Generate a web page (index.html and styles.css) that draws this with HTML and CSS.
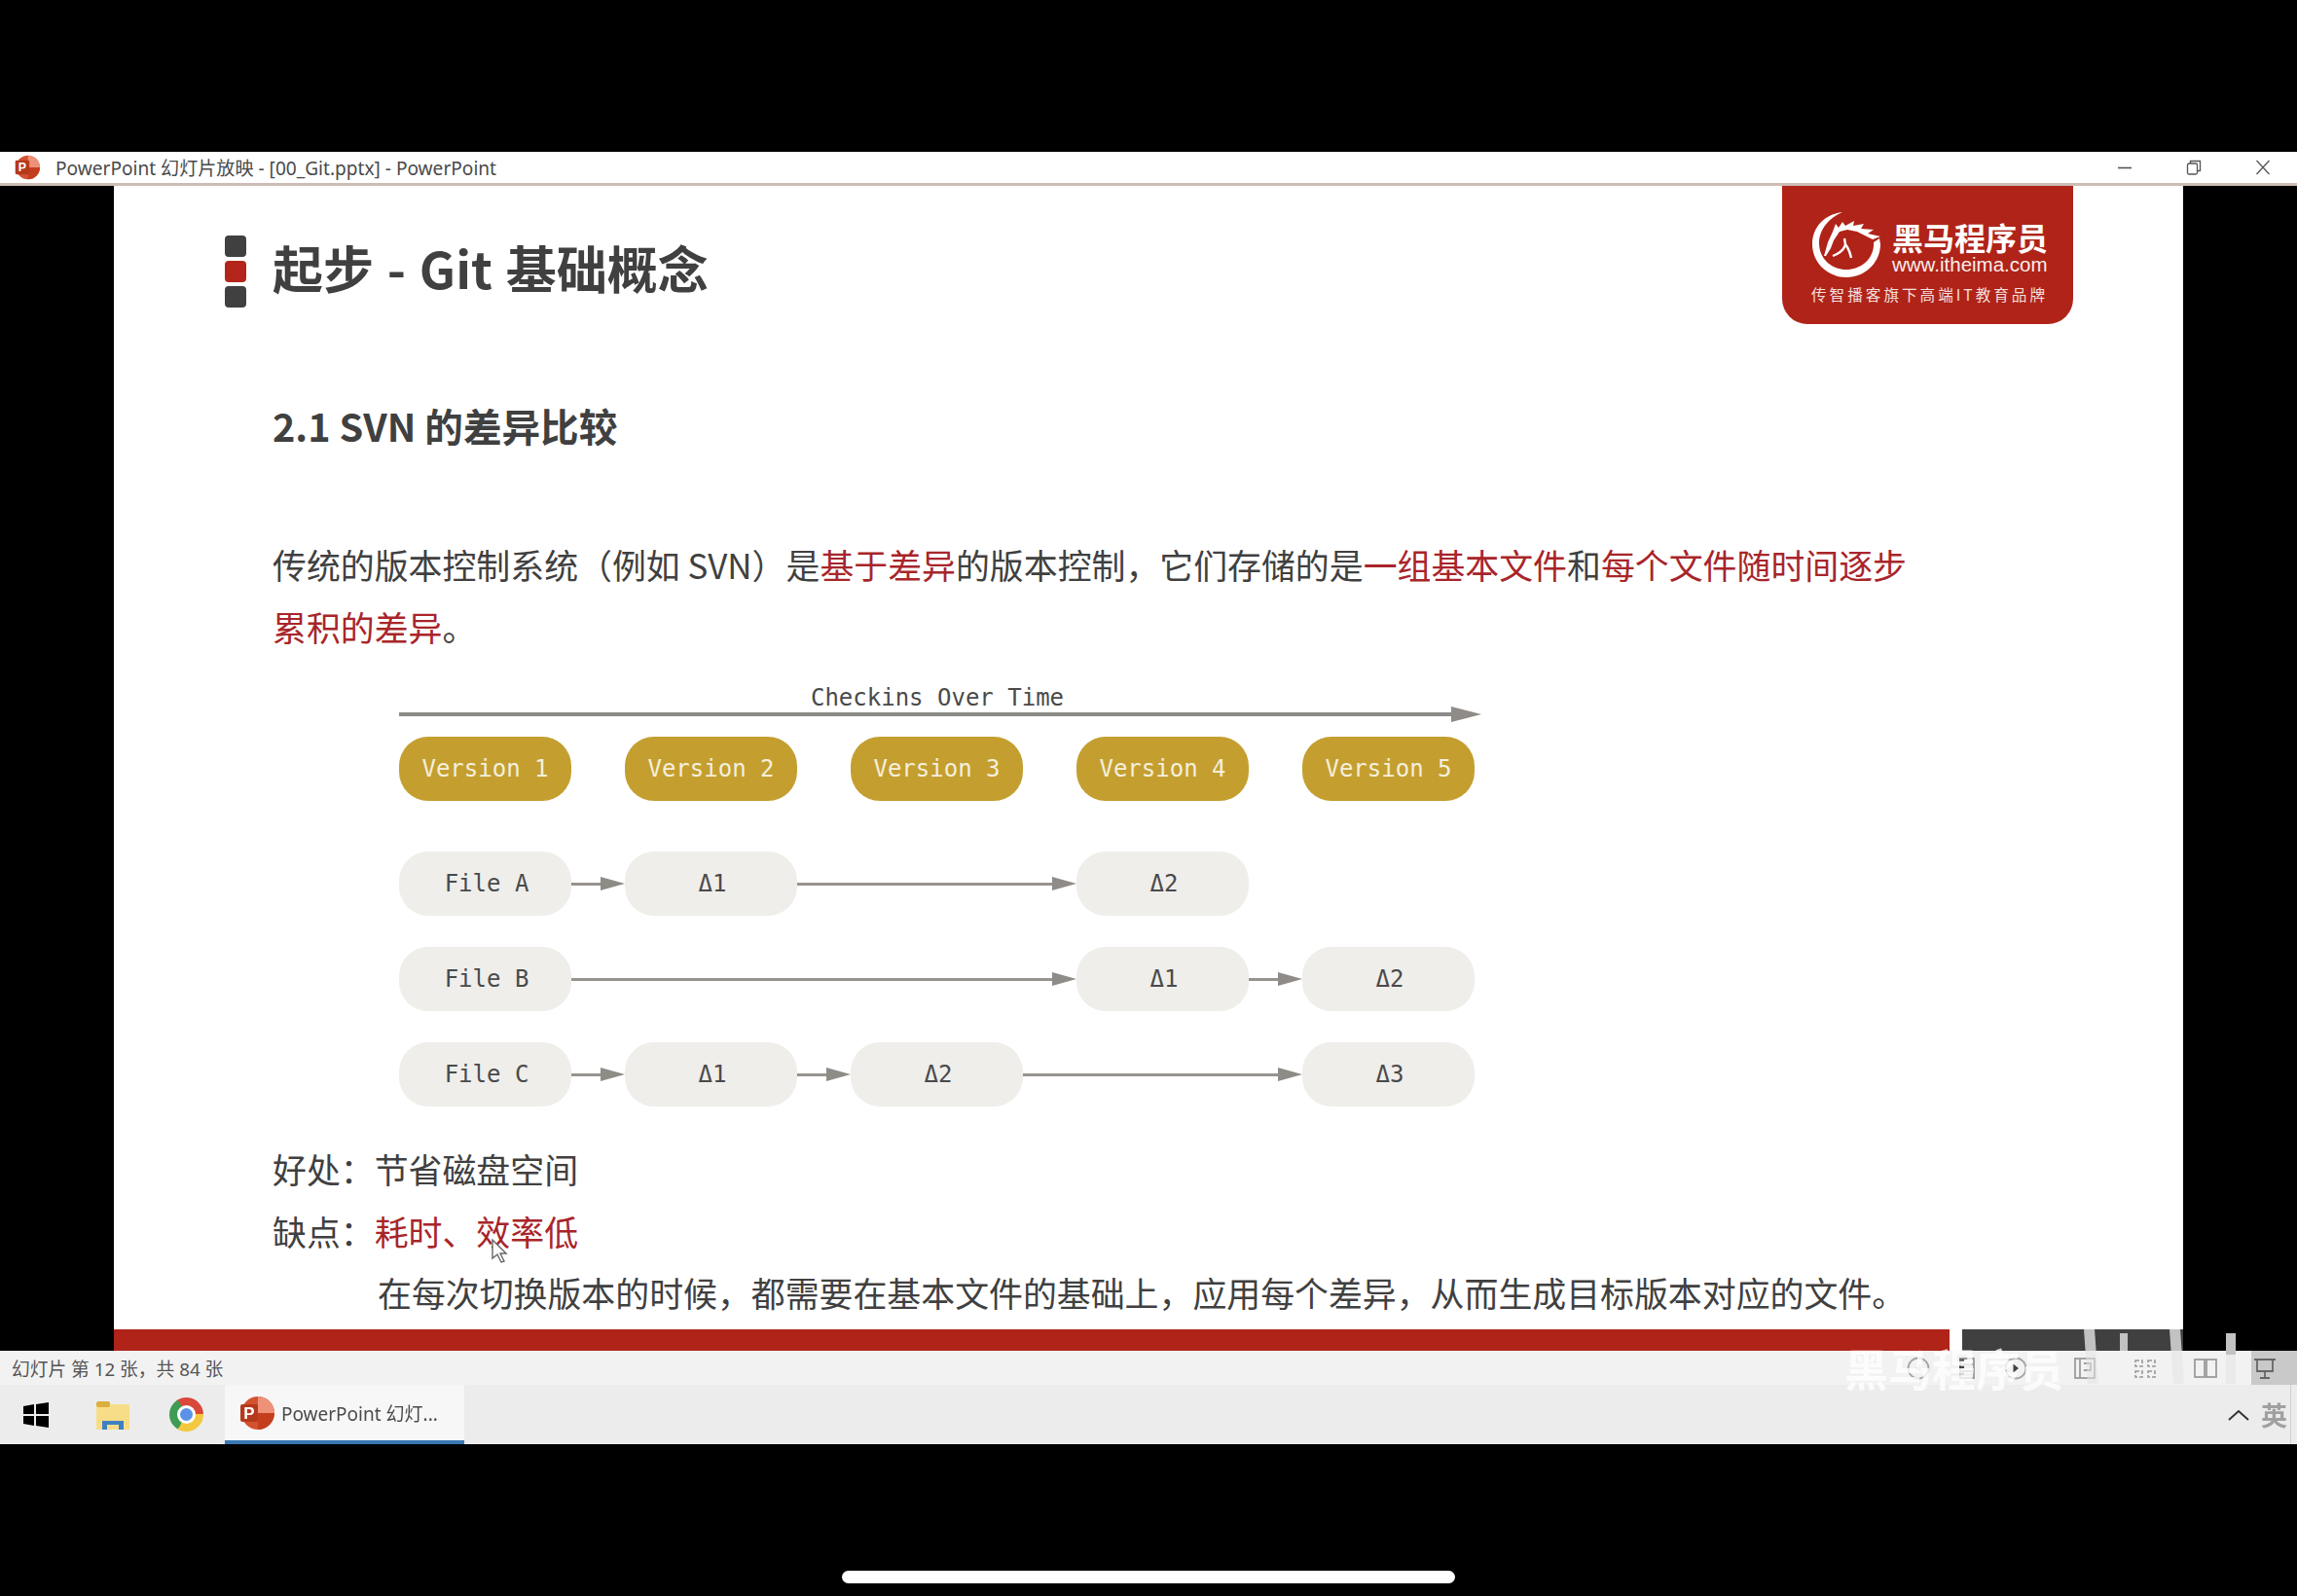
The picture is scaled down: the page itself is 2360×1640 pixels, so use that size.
FILE: index.html
```html
<!DOCTYPE html>
<html lang="zh-CN">
<head>
<meta charset="utf-8">
<title>PowerPoint</title>
<link rel="stylesheet" href="styles.css">
</head>
<body>
<div class="screen">
  <header class="titlebar">
    <svg class="tb-icon" viewBox="0 0 36 36"><circle cx="19" cy="18" r="17" fill="#d35230"/><path d="M19 1a17 17 0 0 1 17 17H19z" fill="#ed9278"/><path d="M19 18h17a17 17 0 0 1-17 17z" fill="#c43e1c"/><rect x="1" y="8" width="20" height="20" rx="2" fill="#b5391c"/><text x="11" y="24" class="tb-p">P</text></svg>
    <span class="tb-title">PowerPoint 幻灯片放映 - [00_Git.pptx] - PowerPoint</span>
    <div class="tb-controls">
      <svg viewBox="0 0 16 16"><path d="M1 8.5h14" stroke="#555" stroke-width="1.6"/></svg>
      <svg viewBox="0 0 16 16" fill="none" stroke="#555" stroke-width="1.3"><rect x="1.5" y="4" width="10" height="11" rx="1.5"/><path d="M4.5 4V1.5h10v10H11.5"/></svg>
      <svg viewBox="0 0 16 16"><path d="M1.5 1l13 14M14.5 1l-13 14" stroke="#555" stroke-width="1.3" fill="none"/></svg>
    </div>
  </header>

  <main class="stage">
    <section class="slide">
      <div class="slide-head">
        <div class="heading">
          <div class="marker"><i></i><i class="on"></i><i></i></div>
          <h1>起步 - Git 基础概念</h1>
        </div>
        <div class="logo">
          <div class="logo-row">
            <svg class="emblem" viewBox="0 0 100 90" fill="#fff">
              <path d="M43 13C25 15 12 28 12 46C12 65 28 80 47 80C67 80 82 64 82 46L81 40L75 44C76 60 63 72 47 72C31 72 19 60 19 45C19 31 29 19 43 13Z"/>
              <path d="M24 58L28 44L33 33L36 25L39 29L43 23L46 27L55 22L54 27L65 25L62 30L75 31L69 35L82 38L74 41L66 37L58 33L48 31L40 33L34 42L31 50L26 58Z"/>
              <path d="M45 40L46 46C45 52 38 56 33 58M46 46C49 50 51 55 52 60" fill="none" stroke="#fff" stroke-width="2.4"/>
            </svg>
            <div class="logo-text"><b>黑马程序员</b><span>www.itheima.com</span></div>
          </div>
          <div class="logo-tag">传智播客旗下高端IT教育品牌</div>
        </div>
      </div>

      <h2>2.1 SVN 的差异比较</h2>
      <p class="body lead">传统的版本控制系统（例如 SVN）是<em>基于差异</em>的版本控制，它们存储的是<em>一组基本文件</em>和<em>每个文件随时间逐步</em><em>累积的差异</em>。</p>

      <div class="diagram">
        <div class="dg-label">Checkins Over Time</div>
        <div class="arrow dg-time"><s></s><u></u></div>
        <div class="dg-grid">
          <div class="pill ver c1">Version 1</div><div class="pill ver c3">Version 2</div><div class="pill ver c5">Version 3</div><div class="pill ver c7">Version 4</div><div class="pill ver c9">Version 5</div>

          <div class="pill c1">File A</div>
          <div class="arrow"><s></s><u></u></div>
          <div class="pill">Δ1</div>
          <div class="arrow span3"><s></s><u></u></div>
          <div class="pill">Δ2</div>

          <div class="pill c1">File B</div>
          <div class="arrow span5"><s></s><u></u></div>
          <div class="pill">Δ1</div>
          <div class="arrow"><s></s><u></u></div>
          <div class="pill">Δ2</div>

          <div class="pill c1">File C</div>
          <div class="arrow"><s></s><u></u></div>
          <div class="pill">Δ1</div>
          <div class="arrow"><s></s><u></u></div>
          <div class="pill">Δ2</div>
          <div class="arrow span3"><s></s><u></u></div>
          <div class="pill">Δ3</div>
        </div>
      </div>

      <div class="notes">
        <p class="body">好处：节省磁盘空间</p>
        <p class="body">缺点：<em>耗时、效率低</em></p>
        <p class="body indent">在每次切换版本的时候，都需要在基本文件的基础上，应用每个差异，从而生成目标版本对应的文件。</p>
      </div>

      <footer class="slide-foot"><div class="foot-red"></div><div class="foot-dark"></div></footer>
    </section>
  </main>

  <div class="statusbar">
    <span class="status-text">幻灯片 第 12 张，共 84 张</span>
    <div class="status-icons">
      <div class="group-a">
        <svg viewBox="0 0 28 28" fill="none" stroke="#a5a5a5" stroke-width="1.8"><circle cx="14" cy="14" r="10.5"/><path d="M16.5 9.5v9L11 14z" fill="#c4c4c4" stroke="none"/></svg>
        <svg viewBox="0 0 28 28" fill="none" stroke="#777" stroke-width="1.8"><path d="M7 4h14v20H7zM7 10h14M7 17h14" stroke="#999"/><path d="M6 6h5M6 13h5M6 20h5" stroke="#444" stroke-width="2.4"/></svg>
        <svg viewBox="0 0 28 28" fill="none" stroke="#a5a5a5" stroke-width="1.8"><circle cx="14" cy="14" r="10.5"/><path d="M11.5 9.5v9L17 14z" fill="#444" stroke="none"/></svg>
      </div>
      <div class="group-b">
        <svg viewBox="0 0 28 28" fill="none" stroke="#9c9c9c" stroke-width="1.8"><rect x="4" y="4" width="20" height="20"/><path d="M9 4v20M13 9h7v7h-7"/></svg>
        <svg viewBox="0 0 28 28" fill="none" stroke="#999" stroke-width="1.6"><path d="M4 6h7v6H4zM17 6h7v6h-7zM4 17h7v6H4zM17 17h7v6h-7z" stroke-dasharray="4 2"/></svg>
        <svg viewBox="0 0 28 28" fill="none" stroke="#9c9c9c" stroke-width="1.8"><rect x="3" y="5" width="22" height="18"/><path d="M13 5v18M15 5v18"/></svg>
        <div class="show-btn"><svg viewBox="0 0 28 28" fill="none" stroke="#666" stroke-width="1.8"><path d="M3 5h22M6 5v12h16V5M14 17v6M9 24h10"/></svg></div>
      </div>
    </div>
  </div>

  <nav class="taskbar">
    <svg class="tk-win" viewBox="0 0 26 26" fill="#000"><path d="M0 4l11-2v10H0zM13 2l13-2v12H13zM0 14h11v10L0 22zM13 14h13v12l-13-2z"/></svg>
    <svg class="tk-folder" viewBox="0 0 34 30"><rect x="0" y="4" width="34" height="26" rx="1" fill="#f8dd88"/><rect x="0" y="1" width="14" height="6" rx="2" fill="#dcae3e"/><path d="M6 30v-9h22v9h-5v-5H11v5z" fill="#3f80c2"/></svg>
    <div class="tk-chrome"><i></i></div>
    <div class="tk-active">
      <svg viewBox="0 0 36 36"><circle cx="19" cy="18" r="17" fill="#d35230"/><path d="M19 1a17 17 0 0 1 17 17H19z" fill="#ed9278"/><path d="M19 18h17a17 17 0 0 1-17 17z" fill="#c43e1c"/><rect x="1" y="9" width="18" height="18" rx="2" fill="#b5391c"/><text x="10" y="24" class="tb-p">P</text></svg>
      <span>PowerPoint 幻灯...</span>
    </div>
    <div class="tray">
      <svg class="tray-up" viewBox="0 0 22 12"><path d="M1 11l10-9 10 9" fill="none" stroke="#333" stroke-width="2"/></svg>
      <span class="tray-ime">英</span>
    </div>
  </nav>

  <div class="home-area"><div class="home-bar"></div></div>

  <div class="watermark">黑马程序员</div>
  <i class="wm-bar wb1"></i><i class="wm-bar wb2"></i><i class="wm-bar wb3"></i><i class="wm-bar wb4"></i>
  <svg class="cursor" viewBox="0 0 18 26"><path d="M2 1v19l5-4 4 8 3-1-4-8h6z" fill="#fff" stroke="#666" stroke-width="1.4"/></svg>
</div>
</body>
</html>
```
FILE: styles.css
```css
* { box-sizing: border-box; }
html, body { margin: 0; padding: 0; background: #000; }
body { width: 2360px; height: 1640px; overflow: hidden; font-family: "Noto Sans", "Noto Sans CJK SC", sans-serif; }
.screen { position: relative; width: 2360px; height: 1640px; padding-top: 156px; display: flex; flex-direction: column; filter: blur(0.6px); }

.titlebar { height: 35px; flex: none; background: #fff; border-bottom: 3px solid #cdbcb5; display: flex; align-items: center; padding-left: 15px; color: #4a4a4a; }
.tb-icon { width: 26px; height: 26px; flex: none; }
.tb-p { font: bold 17px "Liberation Sans", sans-serif; fill: #fff; text-anchor: middle; }
.tb-title { margin-left: 16px; font-size: 19.1px; white-space: nowrap; }
.tb-controls { margin-left: auto; display: flex; gap: 55px; padding-right: 27px; }
.tb-controls svg { width: 16px; height: 16px; display: block; }

.stage { height: 1197px; flex: none; padding-left: 117px; padding-right: 117px; display: flex; }
.slide { width: 2126px; background: #fff; display: flex; flex-direction: column; color: #404040; }
.slide-head { display: flex; justify-content: space-between; height: 142px; padding: 0 113px 0 114px; flex: none; }
.heading { display: flex; gap: 27px; align-items: center; height: 176px; }
.marker { display: flex; flex-direction: column; gap: 4px; }
.marker i { display: block; width: 22px; height: 22px; border-radius: 4px; background: #404040; }
.marker i.on { background: #b3251b; }
h1 { margin: 0 0 9px; font: bold 52px/60px "Noto Sans CJK SC", sans-serif; word-spacing: 2px; white-space: nowrap; }

.logo { width: 299px; height: 142px; background: #b02318; border-radius: 0 0 26px 26px; padding: 24px 0 0 30px; color: #fff; }
.logo-row { display: flex; align-items: flex-start; position: relative; }
.emblem { width: 100px; height: 90px; position: absolute; left: -11px; top: -10px; }
.logo-text { margin-left: 83px; padding-top: 9px; display: flex; flex-direction: column; }
.logo-text b { font: bold 32px/38px "Noto Sans CJK SC", sans-serif; white-space: nowrap; }
.logo-text span { font: 20.5px/20px "Liberation Sans", sans-serif; white-space: nowrap; opacity: .92; }
.logo-tag { padding-top: 10px; font: 15.6px/20px "Noto Sans CJK SC", sans-serif; letter-spacing: 3px; white-space: nowrap; opacity: .85; }

h2 { margin: 79px 0 0 163px; font: bold 39.6px/50px "Noto Sans CJK SC", sans-serif; }
.body { margin: 0; font: 34.9px/63.5px "Noto Sans CJK SC", sans-serif; padding-left: 163px; }
.body em { font-style: normal; color: #a8252a; }
.lead { margin-top: 87px; width: 1860px; }
.indent { padding-left: 271px; white-space: nowrap; }
.notes { margin-top: 33px; }

.diagram { margin: 26px 0 0 293px; width: 1112px; font: 24px/30px "DejaVu Sans Mono", monospace; }
.dg-label { width: 1106px; text-align: center; height: 30px; color: #4a4a4a; }
.arrow { display: flex; align-items: center; }
.arrow s { flex: 1; height: 3px; background: #97938f; display: block; }
.arrow u { display: block; width: 0; height: 0; border-style: solid; border-width: 7.5px 0 7.5px 25px; border-color: transparent transparent transparent #8f8b86; }
.dg-time { margin-top: -6px; height: 16px; width: 1112px; }
.dg-time s { height: 4px; background: #8d8b88; }
.dg-time u { border-width: 8px 0 8px 31px; }
.dg-grid { margin-top: 15px; display: grid; grid-template-columns: 177px 55px 177px 55px 177px 55px 177px 55px 177px; grid-template-rows: 86px 66px 66px 66px; row-gap: 32px; }
.pill { height: 66px; border-radius: 30px; background: #efeeea; color: #4a4a4a; display: flex; align-items: center; justify-content: center; padding-left: 3px; }
.pill.ver { background: #c49f30; color: #f5efdc; grid-row: 1; padding-left: 0; }
.c1 { grid-column: 1; }
.c3 { grid-column: 3; }
.c5 { grid-column: 5; }
.c7 { grid-column: 7; }
.c9 { grid-column: 9; }
.span3 { grid-column: span 3; }
.span5 { grid-column: span 5; }

.slide-foot { margin-top: auto; height: 22px; flex: none; display: flex; gap: 13px; }
.foot-red { width: 1886px; background: #b02318; }
.foot-dark { flex: 1; background: #404040; }

.statusbar { height: 35px; flex: none; background: #f2f2f2; display: flex; align-items: center; padding-left: 12px; position: relative; }
.status-text { font-size: 18.75px; color: #555; white-space: nowrap; }
.status-icons { margin-left: auto; display: flex; gap: 43px; align-items: center; align-self: stretch; }
.status-icons svg { width: 28px; height: 28px; display: block; flex: none; }
.group-a { display: flex; gap: 22px; align-items: center; }
.group-b { display: flex; gap: 34px; align-items: center; align-self: stretch; }
.show-btn { width: 47px; align-self: stretch; background: #c9c9c9; display: flex; align-items: center; margin-left: -1px; }

.taskbar { height: 61px; flex: none; background: #ececec; display: flex; align-items: center; padding-left: 24px; }
.tk-win { width: 26px; height: 26px; flex: none; }
.tk-folder { width: 34px; height: 30px; margin-left: 49px; flex: none; }
.tk-chrome { width: 35px; height: 35px; margin-left: 41px; border-radius: 50%; flex: none; background: conic-gradient(#d9483b 0 90deg, #f2c83f 90deg 210deg, #3f9c55 210deg 330deg, #d9483b 330deg); display: flex; align-items: center; justify-content: center; }
.tk-chrome i { display: block; width: 13px; height: 13px; border-radius: 50%; background: #5a92e8; border: 3px solid #fff; box-sizing: content-box; }
.tk-active { width: 246px; height: 100%; margin-left: 22px; background: #f7f7f7; border-bottom: 4px solid #3a78b5; display: flex; align-items: center; padding-left: 15px; gap: 7px; flex: none; color: #4a4a4a; }
.tk-active svg { width: 36px; height: 36px; flex: none; }
.tk-active span { font-size: 19px; white-space: nowrap; }
.tray { margin-left: auto; margin-right: 6px; display: flex; align-items: center; height: 100%; padding-right: 3px; gap: 12px; border-right: 1px solid #cfcfcf; }
.tray-up { width: 22px; height: 12px; }
.tray-ime { font: bold 27px/1 "Noto Sans CJK SC", sans-serif; color: #a0a0a0; width: 27px; }

.home-area { flex: 1; padding-top: 130px; display: flex; justify-content: center; }
.home-bar { width: 630px; height: 13px; border-radius: 7px; background: #fff; }

.watermark { position: absolute; left: 1895px; top: 1376px; font: bold 45px/60px "Noto Sans CJK SC", sans-serif; color: rgba(255, 255, 255, .78); white-space: nowrap; }
.wm-bar { position: absolute; display: block; background: linear-gradient(#c2c2c2 0 22px, rgba(228, 228, 228, .55) 22px); }
.wb1 { left: 2143px; top: 1366px; width: 11px; height: 56px; transform: skewX(4deg); }
.wb2 { left: 2231px; top: 1366px; width: 11px; height: 56px; transform: skewX(4deg); }
.wb3 { left: 2287px; top: 1370px; width: 10px; height: 52px; }
.wb4 { left: 2178px; top: 1370px; width: 8px; height: 18px; }
.cursor { position: absolute; left: 504px; top: 1273px; width: 18px; height: 26px; }
```
